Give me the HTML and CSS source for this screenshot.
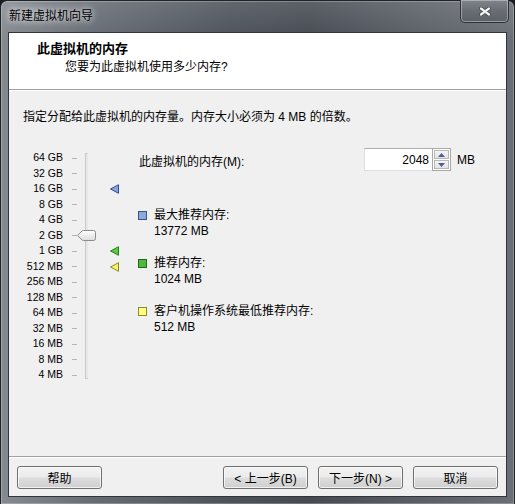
FILE: index.html
```html
<!DOCTYPE html>
<html lang="zh-CN">

<head>
    <meta charset="UTF-8">
    <title>新建虚拟机向导</title>
    <link rel="stylesheet" href="styles.css">
</head>

<body>
    <div class="window">
        <!-- title bar with close button -->
        <div class="titlebar">
            <span class="title">新建虚拟机向导</span>
            <div class="close">
                <svg width="12" height="9" viewBox="0 0 12 9">
                    <path d="M2 1.5 L10 7.5 M10 1.5 L2 7.5" stroke="#3a3f46" stroke-width="3.6" stroke-linecap="round"/>
                    <path d="M2 1.5 L10 7.5 M10 1.5 L2 7.5" stroke="#f4f4f4" stroke-width="2.2" stroke-linecap="round"/>
                </svg>
            </div>
        </div>

        <div class="client">
            <div class="header">
                <div class="header-title">此虚拟机的内存</div>
                <div class="header-sub">您要为此虚拟机使用多少内存?</div>
            </div>

            <div class="content">
                <p class="intro">指定分配给此虚拟机的内存量。内存大小必须为 4 MB 的倍数。</p>

                <div class="main">
                    <!-- memory slider -->
                    <div class="slider">
                        <div class="track"></div>
                        <div class="thumb">
                            <svg width="19" height="11" viewBox="0 0 19 11">
                                <defs>
                                    <linearGradient id="tg" x1="0" y1="0" x2="0" y2="1">
                                        <stop offset="0" stop-color="#ffffff"/>
                                        <stop offset="1" stop-color="#dcdcdc"/>
                                    </linearGradient>
                                </defs>
                                <path d="M0.5 5.5 L5 1 Q5.5 0.5 6.5 0.5 L16.5 0.5 Q18.5 0.5 18.5 2.5 L18.5 8.5 Q18.5 10.5 16.5 10.5 L6.5 10.5 Q5.5 10.5 5 10 Z" fill="url(#tg)" stroke="#8a8a8a"/>
                            </svg>
                        </div>
                        <div class="marker m-max">
                            <svg width="9" height="10" viewBox="0 0 9 10"><path d="M0.5 5 L8.5 0.7 L8.5 9.3 Z" fill="#8aa4dc" stroke="#2d4c8e"/></svg>
                        </div>
                        <div class="marker m-rec">
                            <svg width="9" height="10" viewBox="0 0 9 10"><path d="M0.5 5 L8.5 0.7 L8.5 9.3 Z" fill="#5cc846" stroke="#24801a"/></svg>
                        </div>
                        <div class="marker m-min">
                            <svg width="9" height="10" viewBox="0 0 9 10"><path d="M0.5 5 L8.5 0.7 L8.5 9.3 Z" fill="#f6f466" stroke="#8c8a1e"/></svg>
                        </div>

                        <span class="lbl">64 GB</span><span class="tick"></span>
                        <span class="lbl">32 GB</span><span class="tick"></span>
                        <span class="lbl">16 GB</span><span class="tick"></span>
                        <span class="lbl">8 GB</span><span class="tick"></span>
                        <span class="lbl">4 GB</span><span class="tick"></span>
                        <span class="lbl">2 GB</span><span class="tick"></span>
                        <span class="lbl">1 GB</span><span class="tick"></span>
                        <span class="lbl">512 MB</span><span class="tick"></span>
                        <span class="lbl">256 MB</span><span class="tick"></span>
                        <span class="lbl">128 MB</span><span class="tick"></span>
                        <span class="lbl">64 MB</span><span class="tick"></span>
                        <span class="lbl">32 MB</span><span class="tick"></span>
                        <span class="lbl">16 MB</span><span class="tick"></span>
                        <span class="lbl">8 MB</span><span class="tick"></span>
                        <span class="lbl">4 MB</span><span class="tick"></span>
                    </div>

                    <div class="panel">
                        <div class="mem-row">
                            <span class="mem-label">此虚拟机的内存(M):</span>
                            <div class="spin">
                                <input class="spin-input" type="text" value="2048">
                                <div class="spin-btns">
                                    <span class="spin-btn">
                                        <svg width="7" height="4" viewBox="0 0 7 4"><path d="M0 4 L3.5 0 L7 4 Z" fill="#4d5f9c"/></svg>
                                    </span>
                                    <span class="spin-btn">
                                        <svg width="7" height="4" viewBox="0 0 7 4"><path d="M0 0 L3.5 4 L7 0 Z" fill="#4d5f9c"/></svg>
                                    </span>
                                </div>
                            </div>
                            <span class="unit">MB</span>
                        </div>

                        <div class="legend">
                            <span class="sq sq-max"></span>
                            <div class="legend-text">最大推荐内存:<br>13772 MB</div>
                        </div>
                        <div class="legend">
                            <span class="sq sq-rec"></span>
                            <div class="legend-text">推荐内存:<br>1024 MB</div>
                        </div>
                        <div class="legend">
                            <span class="sq sq-min"></span>
                            <div class="legend-text">客户机操作系统最低推荐内存:<br>512 MB</div>
                        </div>
                    </div>
                </div>
            </div>

            <div class="footer">
                <button class="btn">帮助</button>
                <span class="spacer"></span>
                <button class="btn">&lt; 上一步(B)</button>
                <button class="btn">下一步(N) &gt;</button>
                <button class="btn btn-cancel">取消</button>
            </div>
        </div>
    </div>
</body>

</html>
```

FILE: styles.css
```css
* {
    box-sizing: border-box;
}

body {
    margin: 0;
    width: 515px;
    height: 504px;
    overflow: hidden;
    background-color: #1b1c1e;
    font-family: "Liberation Sans", "Noto Sans CJK SC", sans-serif;
    font-size: 12px;
    color: #000;
}

.window {
    display: flex;
    flex-direction: column;
    height: 504px;
    border: 1px solid #202326;
    border-bottom: none;
    border-radius: 7px 7px 0 0;
    background: linear-gradient(180deg, rgba(255, 255, 255, 0.12) 0%, rgba(255, 255, 255, 0) 40px),
        linear-gradient(90deg, #868b92 0%, #666c74 18%, #4c525a 45%, #464b53 60%, #5b6068 82%, #6a6f76 100%);
    box-shadow: inset 0 0 0 1px rgba(255, 255, 255, 0.25);
    padding: 0 7px 7px 7px;
}

.titlebar {
    display: flex;
    align-items: flex-start;
    height: 31px;
}

.title {
    margin-top: 7px;
    margin-left: 1px;
    font-size: 12px;
    line-height: 16px;
    color: #000;
    text-shadow: 0 0 6px rgba(255, 255, 255, 0.9), 0 0 10px rgba(255, 255, 255, 0.6);
}

.close {
    display: flex;
    align-items: center;
    justify-content: center;
    margin-left: auto;
    margin-right: -2px;
    width: 49px;
    height: 23px;
    margin-top: -1px;
    border: 1px solid #2f3338;
    border-top: none;
    border-radius: 0 0 5px 5px;
    background: linear-gradient(180deg, #80848b 0%, #686d74 50%, #5c6168 100%);
    box-shadow: inset 0 0 0 1px rgba(255, 255, 255, 0.35);
}

.client {
    flex: 1;
    display: flex;
    flex-direction: column;
    border: 1px solid #30353b;
    background-color: #f0f0f0;
}

.header {
    height: 57px;
    background-color: #fff;
    border-bottom: 1px solid #a0a0a0;
    padding-top: 8px;
}

.header-title {
    padding-left: 28px;
    font-weight: bold;
    font-size: 13px;
    line-height: 16px;
}

.header-sub {
    padding-left: 56px;
    margin-top: 2px;
    line-height: 16px;
}

.content {
    flex: 1;
    padding: 18px 14px 0 14px;
    border-top: 1px solid #fff;
}

.intro {
    margin: 0;
    line-height: 16px;
}

.main {
    display: flex;
    margin-top: 23px;
}

/* slider: labels, ticks, track, markers all in one grid */
.slider {
    display: grid;
    grid-template-columns: 40px 9px 5px 8px 3px 22px 9px;
    grid-template-rows: repeat(15, 15.5px);
    padding-top: 2.25px;
}

.lbl {
    grid-column: 1;
    text-align: right;
    font-size: 10.5px;
    line-height: 15.5px;
    white-space: nowrap;
    color: #000;
}

.tick {
    grid-column: 3;
    align-self: center;
    height: 1px;
    background-color: #b4b4b4;
}

.track {
    grid-column: 5;
    grid-row: 1 / 16;
    margin: 3px 0 4px 0;
    border: 1px solid #c8c8c8;
    border-right-color: #e6e6e6;
    background-color: #e9e9e9;
    z-index: 0;
}

.thumb {
    grid-column: 4 / 7;
    grid-row: 6;
    align-self: center;
    display: flex;
    z-index: 1;
}

.marker {
    grid-column: 7;
    align-self: center;
    display: flex;
}

.m-max {
    grid-row: 3;
}

.m-rec {
    grid-row: 7;
}

.m-min {
    grid-row: 8;
}

.panel {
    flex: 1;
    margin-left: 18px;
}

.mem-row {
    display: flex;
    align-items: center;
    height: 23px;
}

.mem-label {
    padding-left: 2px;
    margin-top: 1px;
}

.spin {
    display: flex;
    margin-left: auto;
    width: 86px;
    height: 23px;
    background-color: #fff;
    border: 1px solid #dbdfe6;
    border-top-color: #abadb3;
}

.spin-input {
    width: 67px;
    border: none;
    padding: 0 3px 0 0;
    font: inherit;
    text-align: right;
    background: transparent;
}

.spin-btns {
    display: flex;
    flex-direction: column;
    gap: 1px;
    padding: 1px;
    border: 1px solid #a8a8a8;
    margin: -1px -1px -1px 0;
    background-color: #fff;
}

.spin-btn {
    flex: 1;
    width: 15px;
    display: flex;
    align-items: center;
    justify-content: center;
    border: 1px solid #b8b8b8;
    background: linear-gradient(180deg, #f6f6f6, #e2e2e2);
}

.unit {
    width: 42px;
    padding-left: 7px;
    margin-top: 1px;
}

.legend {
    display: flex;
    align-items: flex-start;
    margin-top: 16px;
}

.mem-row + .legend {
    margin-top: 36px;
}

.sq {
    width: 9px;
    height: 9px;
    margin-top: 4px;
    margin-left: 1px;
    border: 1px solid;
}

.sq-max {
    background-color: #8fa9d9;
    border-color: #36558f;
}

.sq-rec {
    background-color: #4fb93d;
    border-color: #1d6a14;
}

.sq-min {
    background-color: #ffff80;
    border-color: #8f8d2a;
}

.legend-text {
    margin-left: 7px;
    line-height: 16px;
}

.footer {
    display: flex;
    height: 40px;
    padding: 9px 8px 0 8px;
    border-top: 1px solid #a0a0a0;
    box-shadow: inset 0 1px 0 #fff;
}

.spacer {
    flex: 1;
}

.btn {
    width: 85px;
    height: 23px;
    margin-left: 10px;
    padding: 0;
    font: inherit;
    color: #000;
    border: 1px solid #707070;
    border-radius: 3px;
    background: linear-gradient(180deg, #f2f2f2 0%, #ebebeb 48%, #dddddd 52%, #cfcfcf 100%);
    box-shadow: inset 0 0 0 1px rgba(255, 255, 255, 0.7);
}

.btn:first-child {
    margin-left: 0;
}
```
